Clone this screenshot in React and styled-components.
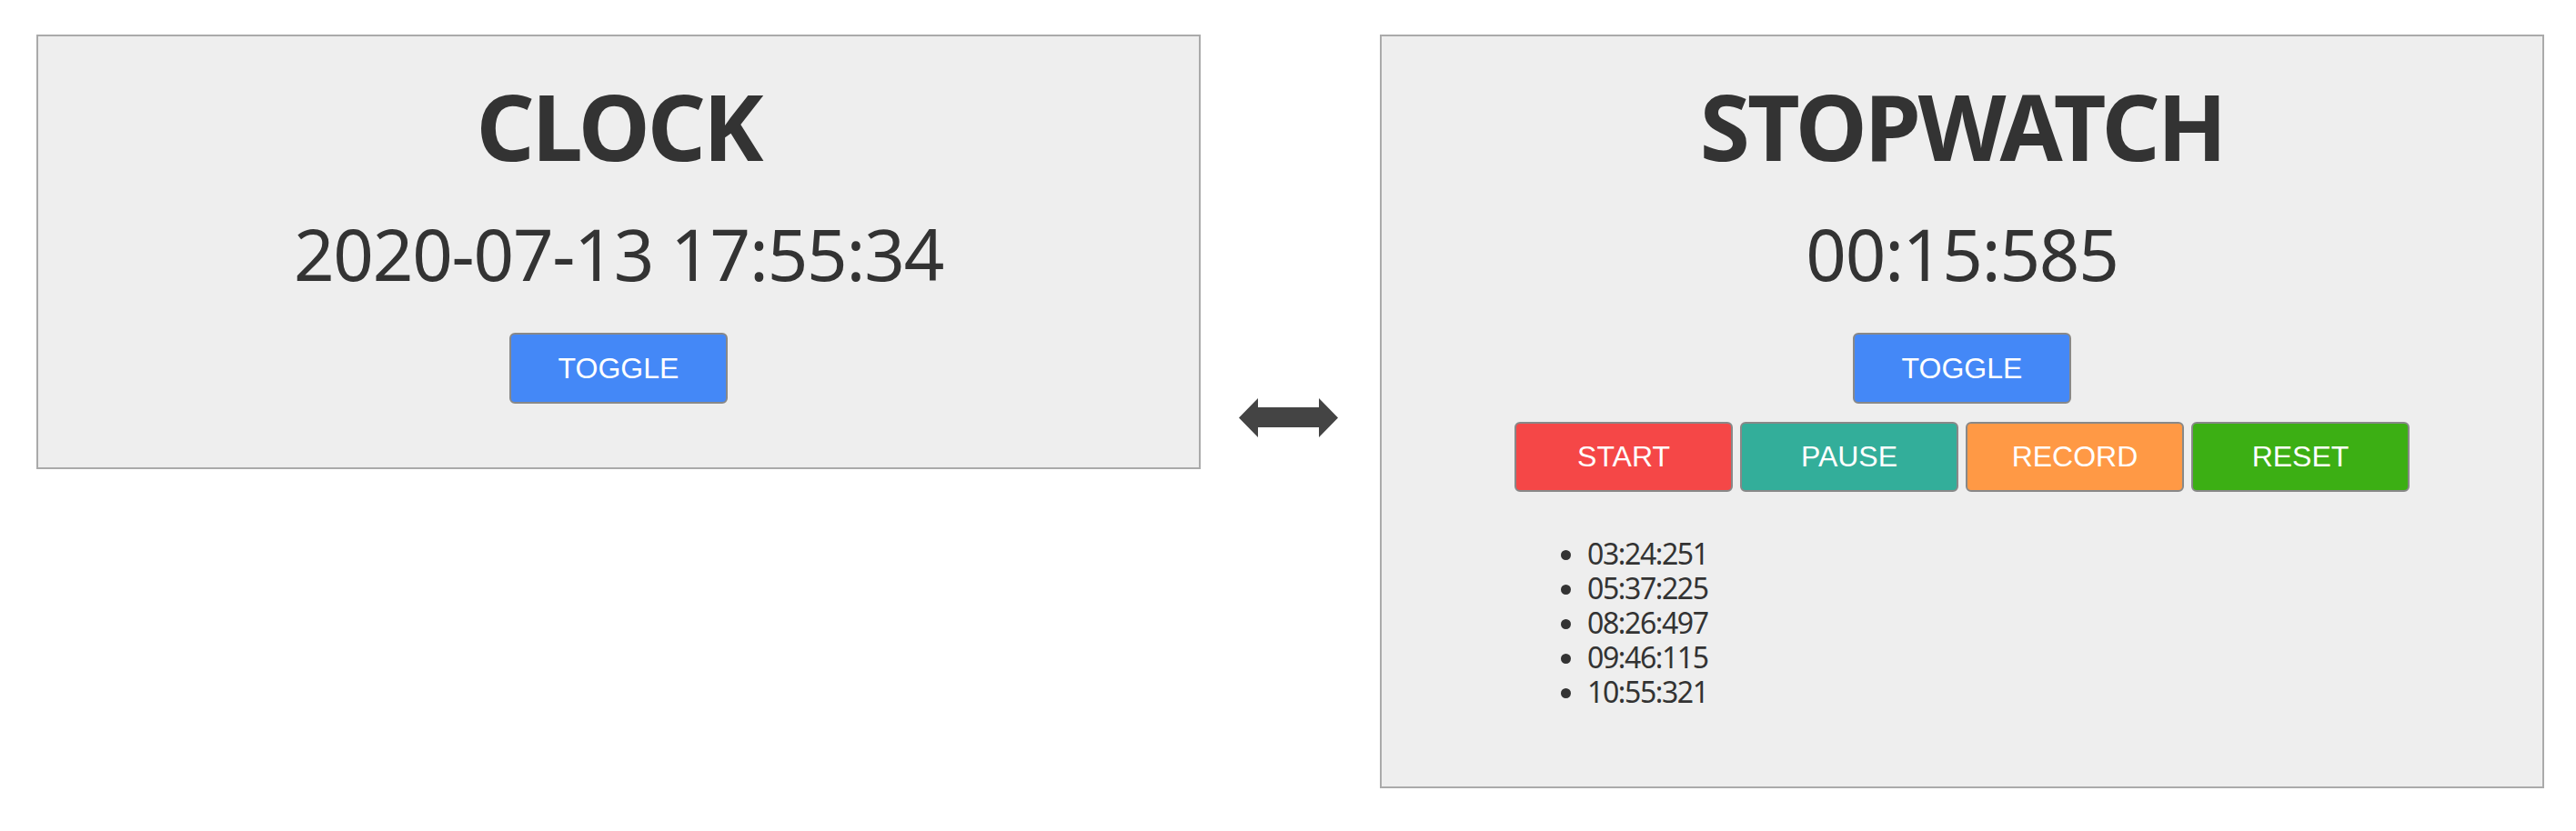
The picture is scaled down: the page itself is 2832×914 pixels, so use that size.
import React from 'react';
import styled, { createGlobalStyle } from 'styled-components';

const GlobalStyle = createGlobalStyle`
  html, body {
    margin: 0;
    padding: 0;
    background: #fff;
  }
  body {
    font-family: "Noto Sans", "Open Sans", sans-serif;
    color: #333;
  }
`;

const Page = styled.div`
  display: flex;
  align-items: flex-start;
  padding: 38px 0 0 40px;
`;

const Panel = styled.section`
  width: 1280px;
  box-sizing: border-box;
  background-color: #eee;
  border: 2px solid #aaa;
  padding: 48px 0 ${props => props.$bottom}px;
  display: flex;
  flex-direction: column;
  align-items: center;
`;

const Title = styled.h1`
  margin: 0;
  font-size: 100px;
  line-height: 100px;
  font-weight: 700;
  letter-spacing: -3px;
  color: #333;
`;

const Display = styled.div`
  margin-top: 52px;
  font-size: 78px;
  line-height: 78px;
  font-weight: 400;
  letter-spacing: -1.2px;
  color: #333;
`;

const Button = styled.button`
  width: 240px;
  height: ${props => props.$height || 78}px;
  box-sizing: border-box;
  border: 2px solid #888;
  border-radius: 6px;
  background-color: ${props => {
    switch (props.$kind) {
      case 'start':
        return '#f54747';
      case 'pause':
        return '#33ae9a';
      case 'record':
        return '#ff9945';
      case 'reset':
        return '#3caf14';
      default:
        return '#4488f7';
    }
  }};
  color: #fff;
  font-family: "Liberation Sans", Arial, sans-serif;
  font-size: 32px;
  padding: 0;
  cursor: pointer;
`;

const ToggleWrap = styled.div`
  margin-top: 48px;
`;

const Controls = styled.div`
  display: flex;
  gap: 8px;
  margin-top: 20px;
`;

const Records = styled.ul`
  width: 984px;
  box-sizing: border-box;
  margin: 49px 0 0;
  padding-left: 80px;
  font-size: 32px;
  line-height: 38px;
  letter-spacing: -1.4px;
  color: #333;
`;

const ArrowBox = styled.div`
  align-self: center;
  margin: 14px 46px 0 42px;
  display: flex;
`;

const records = ['03:24:251', '05:37:225', '08:26:497', '09:46:115', '10:55:321'];

const Arrow = () => (
  <svg width="109" height="43" viewBox="0 0 109 43">
    <polygon
      points="0,21.5 21,0 21,10 88,10 88,0 109,21.5 88,43 88,32 21,32 21,43"
      fill="#444"
    />
  </svg>
);

export default function App() {
  return (
    <>
      <GlobalStyle />
      <Page>
        <Panel $bottom={70}>
          <Title>CLOCK</Title>
          <Display>2020-07-13 17:55:34</Display>
          <ToggleWrap>
            <Button>TOGGLE</Button>
          </ToggleWrap>
        </Panel>

        <ArrowBox>
          <Arrow />
        </ArrowBox>

        <Panel $bottom={85}>
          <Title>STOPWATCH</Title>
          <Display>00:15:585</Display>
          <ToggleWrap>
            <Button>TOGGLE</Button>
          </ToggleWrap>
          <Controls>
            <Button $kind="start" $height={77}>START</Button>
            <Button $kind="pause" $height={77}>PAUSE</Button>
            <Button $kind="record" $height={77}>RECORD</Button>
            <Button $kind="reset" $height={77}>RESET</Button>
          </Controls>
          <Records>
            {records.map(r => (
              <li key={r}>{r}</li>
            ))}
          </Records>
        </Panel>
      </Page>
    </>
  );
}
